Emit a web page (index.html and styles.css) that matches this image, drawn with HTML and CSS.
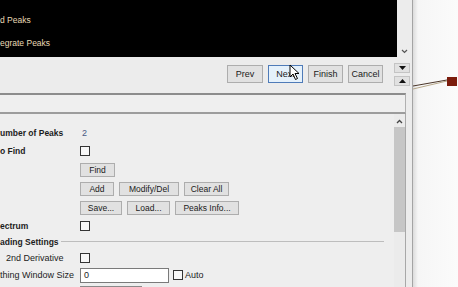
FILE: index.html
```html
<!DOCTYPE html>
<html lang="en">
<head>
    <meta charset="UTF-8">
    <title>Peak Wizard</title>
    <link rel="stylesheet" href="styles.css">
</head>
<body>
    <div class="screen">
        <div class="dialog">
            <div class="top">
                <div class="console">
                    <div class="log-line">d Peaks</div>
                    <div class="log-line">egrate Peaks</div>
                </div>
                <div class="console-scroll">
                    <svg width="7" height="5" viewBox="0 0 7 5"><path d="M1 1 L3.5 3.5 L6 1" fill="none" stroke="#555" stroke-width="1.2"/></svg>
                </div>
            </div>

            <div class="navbar">
                <div class="nav-buttons">
                    <button class="btn nav w36">Prev</button>
                    <button class="btn nav active">Next</button>
                    <button class="btn nav">Finish</button>
                    <button class="btn nav">Cancel</button>
                </div>
                <div class="step-buttons">
                    <button class="step"><svg width="7" height="4" viewBox="0 0 7 4"><path d="M0 0 H7 L3.5 4 Z" fill="#111"/></svg></button>
                    <button class="step"><svg width="7" height="4" viewBox="0 0 7 4"><path d="M0 4 H7 L3.5 0 Z" fill="#111"/></svg></button>
                </div>
            </div>

            <div class="strip"></div>

            <div class="panel">
                <div class="form">
                    <div class="row h18">
                        <span class="label bold">umber of Peaks</span>
                        <span class="value">2</span>
                    </div>
                    <div class="row h18">
                        <span class="label bold">o Find</span>
                        <span class="check"></span>
                    </div>
                    <div class="row h19">
                        <span class="label"></span>
                        <button class="btn small w35">Find</button>
                    </div>
                    <div class="row h20">
                        <span class="label"></span>
                        <div class="group">
                            <button class="btn small w34">Add</button>
                            <button class="btn small w60">Modify/Del</button>
                            <button class="btn small w45">Clear All</button>
                        </div>
                    </div>
                    <div class="row h18">
                        <span class="label"></span>
                        <div class="group">
                            <button class="btn small w42">Save...</button>
                            <button class="btn small w43">Load...</button>
                            <button class="btn small w64">Peaks Info...</button>
                        </div>
                    </div>
                    <div class="row h18">
                        <span class="label bold">ectrum</span>
                        <span class="check"></span>
                    </div>
                    <div class="section">
                        <span class="bold">ading Settings</span>
                        <span class="rule"></span>
                    </div>
                    <div class="row h17">
                        <span class="label indent">2nd Derivative</span>
                        <span class="check"></span>
                    </div>
                    <div class="row h18">
                        <span class="label">thing Window Size</span>
                        <div class="field">0</div>
                        <span class="check auto"></span>
                        <span class="auto-text">Auto</span>
                    </div>
                    <div class="row">
                        <span class="label"></span>
                        <div class="next-field"></div>
                    </div>
                </div>
                <div class="panel-scroll">
                    <svg width="7" height="5" viewBox="0 0 7 5"><path d="M1 4 L3.5 1.5 L6 4" fill="none" stroke="#444" stroke-width="1.3"/></svg>
                    <div class="thumb"></div>
                </div>
            </div>
        </div>
        <div class="outside"></div>

        <svg class="link" width="46" height="14" viewBox="0 0 46 14">
            <path d="M0 9 L34 3" stroke="#4a3528" stroke-width="1"/>
            <path d="M0 12 L34 4" stroke="#b7a88a" stroke-width="1"/>
            <rect x="34" y="0" width="10" height="9" fill="#7b1c0c"/>
        </svg>

        <svg class="cursor" width="12" height="17" viewBox="0 0 12 17">
            <path d="M1 1 L1 13 L4 10 L6.5 15.5 L8.5 14.5 L6 9.5 L10 9.5 Z" fill="#fff" stroke="#000" stroke-width="1"/>
        </svg>
    </div>
</body>
</html>
```

FILE: styles.css
```css
body {
    margin: 0;
    font-family: "Liberation Sans", Arial, sans-serif;
    background: #fbfbfb;
}
.screen {
    position: relative;
    display: flex;
    width: 458px;
    height: 287px;
    overflow: hidden;
}
.dialog {
    width: 412px;
    display: flex;
    flex-direction: column;
    background: #ececec;
    border-right: 1px solid #a4a4a4;
}
.outside {
    flex: 1;
    background: linear-gradient(to right, #dcdcdc, #f6f6f6 5px, #fbfbfb);
}

/* console output */
.top {
    display: flex;
    flex: none;
    height: 57px;
}
.console {
    flex: 1;
    padding-top: 9px;
    background: #000;
    overflow: hidden;
}
.log-line {
    height: 23px;
    line-height: 23px;
    font-size: 8.5px;
    color: #e8dab5;
}
.console-scroll {
    width: 15px;
    display: flex;
    align-items: flex-end;
    justify-content: center;
    padding-bottom: 3px;
    box-sizing: border-box;
}

/* buttons */
.btn {
    font-family: "Liberation Sans", Arial, sans-serif;
    background: #e1e1e1;
    border: 1px solid #adadad;
    color: #1a1a1a;
    padding: 0;
    border-radius: 0;
}
.btn.nav {
    width: 35px;
    height: 18px;
    font-size: 9px;
}
.btn.active {
    background: #e5f1fb;
    border-color: #4f7bb8;
}
.btn.small {
    height: 14px;
    font-size: 8.5px;
}
.w34 { width: 34px; }
.w35 { width: 35px; }
.w36 { width: 36px !important; }
.w42 { width: 42px; }
.w43 { width: 43px; }
.w45 { width: 45px; }
.w60 { width: 60px; }
.w64 { width: 64px; }

.navbar {
    display: flex;
    flex: none;
    height: 36px;
}
.nav-buttons {
    display: flex;
    gap: 5px;
    margin-left: 227px;
    padding-top: 8px;
}
.step-buttons {
    display: flex;
    flex-direction: column;
    gap: 3px;
    margin-left: 11px;
    padding-top: 6px;
}
.step {
    width: 16px;
    height: 10px;
    padding: 0;
    display: flex;
    align-items: center;
    justify-content: center;
    background: #e1e1e1;
    border: 1px solid #c4c4c4;
}

.strip {
    flex: none;
    width: 406px;
    height: 21px;
    box-sizing: border-box;
    border-top: 2px solid #8c8c8c;
    border-bottom: 2px solid #9c9c9c;
    border-right: 1px solid #b0b0b0;
    background: #efefef;
}

/* settings panel */
.panel {
    flex: 1;
    min-height: 0;
    width: 406px;
    display: flex;
    border-right: 1px solid #a8a8a8;
    box-sizing: border-box;
    background: #eeeeee;
}
.form {
    flex: 1;
    padding: 10px 10px 0 0;
    font-size: 9px;
    color: #1c1c1c;
}
.row {
    display: flex;
    align-items: center;
    flex: none;
}
.h17 { height: 17px; }
.h18 { height: 18px; }
.h19 { height: 19px; }
.h20 { height: 20px; }
.label {
    width: 80px;
    flex: none;
    white-space: nowrap;
}
.label.indent {
    padding-left: 6px;
    width: 74px;
}
.bold {
    font-weight: bold;
    font-size: 8.5px;
}
.value {
    margin-left: 2px;
    color: #4a5a84;
}
.group {
    display: flex;
    gap: 5px;
}
.check {
    width: 8px;
    height: 8px;
    border: 1px solid #333;
    background: #f7f7f7;
}
.check.auto {
    margin-left: 4px;
}
.auto-text {
    margin-left: 2px;
}
.section {
    display: flex;
    align-items: center;
    height: 14px;
    gap: 2px;
}
.rule {
    flex: 1;
    border-top: 1px solid #bdbdbd;
    margin-top: -1px;
}
.field {
    width: 84px;
    height: 13px;
    line-height: 13px;
    padding-left: 3px;
    border: 1px solid #7a7a7a;
    background: #fff;
}
.next-field {
    width: 60px;
    height: 12px;
    margin-top: 2px;
    border: 1px solid #8a8a8a;
    background: #fff;
}
.panel-scroll {
    width: 11px;
    display: flex;
    flex-direction: column;
    align-items: center;
    padding-top: 5px;
    background: #ebebeb;
}
.thumb {
    width: 11px;
    height: 105px;
    margin-top: 3px;
    background: #c6c6c6;
}

/* diagram connection and pointer */
.link {
    position: absolute;
    left: 413px;
    top: 77px;
}
.cursor {
    position: absolute;
    left: 289px;
    top: 64px;
}
```
